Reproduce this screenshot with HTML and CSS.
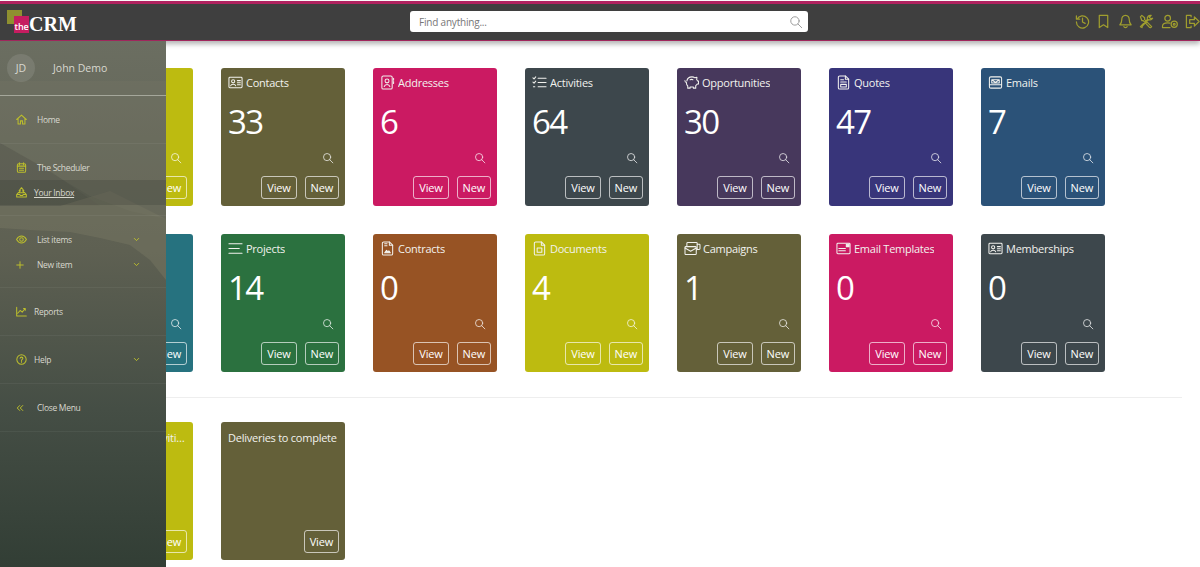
FILE: index.html
```html
<!DOCTYPE html>
<html lang="en">
<head>
    <meta charset="UTF-8">
    <meta name="viewport" content="width=device-width, initial-scale=1.0">
    <title>theCRM</title>
    <link rel="stylesheet" href="styles.css">
</head>
<body>
    <!-- Icon sprite -->
    <svg class="sprite" xmlns="http://www.w3.org/2000/svg">
        <symbol id="i-search" viewBox="0 0 16 16"><circle cx="6.800" cy="6.800" r="4.800"/><path d="M10.300 10.300 14.500 14.500"/></symbol>
        <symbol id="i-contact" viewBox="0 0 16 16"><rect x="1" y="2.500" width="14" height="11" rx="1"/><circle cx="5.500" cy="6.700" r="1.700"/><path d="M2.800 11.500c.6-2.200 4.800-2.200 5.400 0M10 6h3.200M10 8.200h3.200M10 10.400h3.200"/></symbol>
        <symbol id="i-address" viewBox="0 0 16 16"><rect x="2" y="1" width="11" height="14" rx="1.500"/><circle cx="7.500" cy="6.300" r="2.100"/><path d="M4.500 12.300c.7-3 5.300-3 6 0M14.500 3.500v2M14.500 7v2"/></symbol>
        <symbol id="i-check" viewBox="0 0 16 16"><path d="M1 3l1.200 1.200L4 2M1 7.500l1.200 1.200L4 6.500M1.500 12.500h1.500M6.500 3.500H15M6.500 8H15M6.500 12.500H15"/></symbol>
        <symbol id="i-piggy" viewBox="0 0 16 16"><path d="M3 6.500C3.500 3.500 6 2 8.500 2c1.500 0 2.500.5 3.300 1l2-.5-.3 2.500c.5.500.8 1 1 1.500H15.500v3h-1.300c-.5.800-1 1.300-1.700 1.800V14h-2.500v-1.200H6.500V14H4v-2.300C2.800 10.800 2.500 9.500 2.700 8 1.500 7.800 1 7 1 6"/><path d="M6.500 5c1-.4 2.200-.4 3 0"/></symbol>
        <symbol id="i-quote" viewBox="0 0 16 16"><path d="M10 1H4a1.500 1.500 0 0 0-1.500 1.500v11A1.500 1.500 0 0 0 4 15h8a1.500 1.500 0 0 0 1.500-1.500V4.500z"/><path d="M10 1v3.500h3.500M5 5h3M5 7.500h6M5 10h6v2.800H5z"/></symbol>
        <symbol id="i-email" viewBox="0 0 16 16"><rect x="1.500" y="2" width="13" height="12" rx="1.500"/><path d="M1.500 10.500h13M4 5l4 3 4-3M4 5h8v3.500H4z"/></symbol>
        <symbol id="i-list" viewBox="0 0 16 16"><path d="M1 3h14M1 8h11M1 13h14"/></symbol>
        <symbol id="i-contract" viewBox="0 0 16 16"><path d="M10 1H4a1.500 1.500 0 0 0-1.500 1.500v11A1.500 1.500 0 0 0 4 15h8a1.500 1.500 0 0 0 1.500-1.500V4.500z"/><path d="M10 1v3.500h3.500M5 3h2.500M5 5h2.500"/><path class="solid" d="M5 12.500l2-2.500 1.500 1.500 1-1 1.500 2z"/></symbol>
        <symbol id="i-doc" viewBox="0 0 16 16"><path d="M10 1H4a1.500 1.500 0 0 0-1.500 1.500v11A1.500 1.500 0 0 0 4 15h8a1.500 1.500 0 0 0 1.500-1.500V4.500z"/><path d="M10 1v3.500h3.500M5.500 7.500h5v4.500h-5z"/></symbol>
        <symbol id="i-campaign" viewBox="0 0 18 16"><rect x="3" y="1.500" width="11" height="8" rx="1"/><path d="M14 3.500h2.500a1 1 0 0 1 .5 1v3.500a1 1 0 0 1-1 1h-2"/><rect x="1" y="6" width="12" height="8.500" rx="1" fill="var(--card-bg)"/><path d="M1 7.500l6 3.500 6-3.500"/></symbol>
        <symbol id="i-template" viewBox="0 0 16 16"><rect x="1" y="2.500" width="14" height="11" rx="1"/><path d="M3 8h7M3 10.500h7"/><path class="solid" d="M11 3.500h3v2.500h-3z"/></symbol>
        <symbol id="i-history" viewBox="0 0 16 16"><path d="M2.200 5.500A6.500 6.500 0 1 1 1.500 8.500M1.500 2v3.500H5M8 4.500V8.500l2.800 1.500"/></symbol>
        <symbol id="i-bookmark" viewBox="0 0 16 16"><path d="M3.500 1.500h9v13L8 11.500l-4.500 3z"/></symbol>
        <symbol id="i-bell" viewBox="0 0 16 16"><path d="M8 1.500c-2.800 0-4 2.200-4 4.500 0 3-1 4.500-2 5.500h12c-1-1-2-2.500-2-5.500 0-2.300-1.200-4.500-4-4.500zM6.300 13.500c.3 1.300 3.100 1.300 3.400 0"/></symbol>
        <symbol id="i-tools" viewBox="0 0 16 16"><path d="M1.500 3 3 1.500l3 2.500v2l7.500 7.500-1 1-1.300-.2L4.500 7H3zM14.500 4.500A3.300 3.300 0 0 1 10.300 6L3.500 12.800l-.3 1.700-1.700-1 7.500-7.800A3.300 3.300 0 0 1 13 1.500L11 3.500l1.500 1.500z"/></symbol>
        <symbol id="i-usergear" viewBox="0 0 18 16"><circle cx="6.500" cy="4.500" r="3"/><path d="M1 14.500v-1.500c0-2.500 2-3.500 5.500-3.500 1 0 1.800.1 2.500.3M1 14.500h8"/><circle cx="13.500" cy="11" r="3.300"/><circle cx="13.500" cy="11" r="1"/></symbol>
        <symbol id="i-exit" viewBox="0 0 16 16"><path d="M6.500 3V1.500h-5v13h5V13M5 6h5V3l5 5-5 5v-3H5z"/></symbol>
        <symbol id="i-home" viewBox="0 0 16 16"><path d="M1 8l7-6.500L15 8M3 6.500V14.500h3.500V10h3v4.500H13V6.500"/></symbol>
        <symbol id="i-calendar" viewBox="0 0 16 16"><rect x="2" y="2.500" width="12" height="12.500" rx="2"/><path d="M5 1v3M11 1v3M2 6h12M5 9h6M5 12h6"/></symbol>
        <symbol id="i-inbox" viewBox="0 0 16 16"><path d="M8 1 4.500 5.500H6.500L4 8.500h8L9.500 5.500h2zM3.500 8 1 11v3.500h14V11l-2.500-3M1 11h4.500l1 1.500h3l1-1.500H15"/></symbol>
        <symbol id="i-eye" viewBox="0 0 16 16"><path d="M.8 8C3 4 5.500 3 8 3s5 1 7.200 5c-2.200 4-4.700 5-7.200 5S3 12 .8 8z"/><circle cx="8" cy="8" r="2.600"/></symbol>
        <symbol id="i-plus" viewBox="0 0 16 16"><path d="M8 1.500v13M1.500 8h13"/></symbol>
        <symbol id="i-chart" viewBox="0 0 16 16"><path d="M1 2v12.500h14M2.500 10.500 6 6.500l3 2.500 4-5M11 3.500h2.500V6"/></symbol>
        <symbol id="i-help" viewBox="0 0 16 16"><circle cx="8" cy="8" r="6.800"/><path d="M6 6.200C6.200 4 10 4 10 6.200 10 7.800 8 7.800 8 9.500M8 11v1"/></symbol>
        <symbol id="i-chevron" viewBox="0 0 16 16"><path d="M3 5.500 8 10.500 13 5.500"/></symbol>
        <symbol id="i-close" viewBox="0 0 16 16"><path d="M7.500 3 2.500 8l5 5M13.500 3l-5 5 5 5"/></symbol>
    </svg>

    <header class="topbar">
        <a class="logo" href="#">
            <span class="logo-back"></span>
            <span class="logo-front">the</span>
            <span class="logo-crm">CRM</span>
        </a>
        <div class="search-box">
            <span>Find anything...</span>
            <svg class="icon"><use href="#i-search"/></svg>
        </div>
        <div class="top-icons">
            <svg class="icon"><use href="#i-history"/></svg>
            <svg class="icon"><use href="#i-bookmark"/></svg>
            <svg class="icon"><use href="#i-bell"/></svg>
            <svg class="icon"><use href="#i-tools"/></svg>
            <svg class="icon wide"><use href="#i-usergear"/></svg>
            <svg class="icon"><use href="#i-exit"/></svg>
        </div>
    </header>

    <aside class="side-menu">
        <svg class="side-bg" viewBox="0 0 166 526" preserveAspectRatio="none">
            <defs>
                <linearGradient id="sideFade" x1="0" y1="0" x2="0" y2="1">
                    <stop offset="0" stop-color="#6b6e61"/>
                    <stop offset="0.4" stop-color="#5e6052"/>
                    <stop offset="0.7" stop-color="#454e45"/>
                    <stop offset="1" stop-color="#323e35"/>
                </linearGradient>
            </defs>
            <rect width="166" height="526" fill="url(#sideFade)"/>
            <path d="M0 102 40 125 90 155 130 170 166 178V40H0z" fill="#777868" opacity="0.3"/>
            <path d="M0 102 50 130 100 165 0 165z" fill="#4f5146" opacity="0.25"/>
            <path d="M60 165 110 150 166 178V239L150 219 130 204 100 197 70 191 30 189 0 187V165z" fill="#757562" opacity="0.5"/>
        </svg>
        <div class="user-row">
            <span class="avatar">JD</span>
            <span class="user-name">John Demo</span>
        </div>
        <nav class="menu-group single">
            <a class="menu-item" href="#"><svg class="icon"><use href="#i-home"/></svg><span>Home</span></a>
        </nav>
        <nav class="menu-group double">
            <a class="menu-item" href="#"><svg class="icon"><use href="#i-calendar"/></svg><span>The Scheduler</span></a>
            <a class="menu-item near active" href="#"><svg class="icon"><use href="#i-inbox"/></svg><span>Your Inbox</span></a>
        </nav>
        <nav class="menu-group double">
            <a class="menu-item" href="#"><svg class="icon"><use href="#i-eye"/></svg><span>List items</span><svg class="icon caret"><use href="#i-chevron"/></svg></a>
            <a class="menu-item" href="#"><svg class="icon small"><use href="#i-plus"/></svg><span>New item</span><svg class="icon caret"><use href="#i-chevron"/></svg></a>
        </nav>
        <nav class="menu-group single">
            <a class="menu-item near" href="#"><svg class="icon"><use href="#i-chart"/></svg><span>Reports</span></a>
        </nav>
        <nav class="menu-group single">
            <a class="menu-item near" href="#"><svg class="icon"><use href="#i-help"/></svg><span>Help</span><svg class="icon caret"><use href="#i-chevron"/></svg></a>
        </nav>
        <nav class="menu-group single">
            <a class="menu-item" href="#"><svg class="icon small"><use href="#i-close"/></svg><span>Close Menu</span></a>
        </nav>
    </aside>

    <main class="dashboard">
        <section class="card-grid">
            <div class="card lime">
                <div class="card-head"><svg class="icon"><use href="#i-contact"/></svg><span>Accounts</span></div>
                <div class="card-count">12</div>
                <svg class="icon find"><use href="#i-search"/></svg>
                <div class="card-actions"><a href="#">View</a><a href="#">New</a></div>
            </div>
            <div class="card olive">
                <div class="card-head"><svg class="icon"><use href="#i-contact"/></svg><span>Contacts</span></div>
                <div class="card-count">33</div>
                <svg class="icon find"><use href="#i-search"/></svg>
                <div class="card-actions"><a href="#">View</a><a href="#">New</a></div>
            </div>
            <div class="card pink">
                <div class="card-head"><svg class="icon"><use href="#i-address"/></svg><span>Addresses</span></div>
                <div class="card-count">6</div>
                <svg class="icon find"><use href="#i-search"/></svg>
                <div class="card-actions"><a href="#">View</a><a href="#">New</a></div>
            </div>
            <div class="card slate">
                <div class="card-head"><svg class="icon"><use href="#i-check"/></svg><span>Activities</span></div>
                <div class="card-count">64</div>
                <svg class="icon find"><use href="#i-search"/></svg>
                <div class="card-actions"><a href="#">View</a><a href="#">New</a></div>
            </div>
            <div class="card purple">
                <div class="card-head"><svg class="icon"><use href="#i-piggy"/></svg><span>Opportunities</span></div>
                <div class="card-count">30</div>
                <svg class="icon find"><use href="#i-search"/></svg>
                <div class="card-actions"><a href="#">View</a><a href="#">New</a></div>
            </div>
            <div class="card indigo">
                <div class="card-head"><svg class="icon"><use href="#i-quote"/></svg><span>Quotes</span></div>
                <div class="card-count">47</div>
                <svg class="icon find"><use href="#i-search"/></svg>
                <div class="card-actions"><a href="#">View</a><a href="#">New</a></div>
            </div>
            <div class="card blue">
                <div class="card-head"><svg class="icon"><use href="#i-email"/></svg><span>Emails</span></div>
                <div class="card-count">7</div>
                <svg class="icon find"><use href="#i-search"/></svg>
                <div class="card-actions"><a href="#">View</a><a href="#">New</a></div>
            </div>

            <div class="card teal">
                <div class="card-head"><svg class="icon"><use href="#i-calendar"/></svg><span>Appointments</span></div>
                <div class="card-count">9</div>
                <svg class="icon find"><use href="#i-search"/></svg>
                <div class="card-actions"><a href="#">View</a><a href="#">New</a></div>
            </div>
            <div class="card green">
                <div class="card-head"><svg class="icon"><use href="#i-list"/></svg><span>Projects</span></div>
                <div class="card-count">14</div>
                <svg class="icon find"><use href="#i-search"/></svg>
                <div class="card-actions"><a href="#">View</a><a href="#">New</a></div>
            </div>
            <div class="card brown">
                <div class="card-head"><svg class="icon"><use href="#i-contract"/></svg><span>Contracts</span></div>
                <div class="card-count">0</div>
                <svg class="icon find"><use href="#i-search"/></svg>
                <div class="card-actions"><a href="#">View</a><a href="#">New</a></div>
            </div>
            <div class="card lime">
                <div class="card-head"><svg class="icon"><use href="#i-doc"/></svg><span>Documents</span></div>
                <div class="card-count">4</div>
                <svg class="icon find"><use href="#i-search"/></svg>
                <div class="card-actions"><a href="#">View</a><a href="#">New</a></div>
            </div>
            <div class="card olive">
                <div class="card-head"><svg class="icon wide"><use href="#i-campaign"/></svg><span>Campaigns</span></div>
                <div class="card-count">1</div>
                <svg class="icon find"><use href="#i-search"/></svg>
                <div class="card-actions"><a href="#">View</a><a href="#">New</a></div>
            </div>
            <div class="card pink">
                <div class="card-head"><svg class="icon"><use href="#i-template"/></svg><span>Email Templates</span></div>
                <div class="card-count">0</div>
                <svg class="icon find"><use href="#i-search"/></svg>
                <div class="card-actions"><a href="#">View</a><a href="#">New</a></div>
            </div>
            <div class="card slate">
                <div class="card-head"><svg class="icon"><use href="#i-contact"/></svg><span>Memberships</span></div>
                <div class="card-count">0</div>
                <svg class="icon find"><use href="#i-search"/></svg>
                <div class="card-actions"><a href="#">View</a><a href="#">New</a></div>
            </div>
        </section>

        <hr class="divider">

        <section class="card-grid">
            <div class="card lime">
                <div class="card-head plain"><span>Uncompleted activities</span></div>
                <div class="card-actions"><a href="#">View</a><a href="#">New</a></div>
            </div>
            <div class="card olive">
                <div class="card-head plain"><span>Deliveries to complete</span></div>
                <div class="card-actions"><a href="#">View</a></div>
            </div>
        </section>
    </main>
</body>
</html>
```

FILE: styles.css
```css
html, body {
    height: 100%;
}

body {
    margin: 0;
    padding: 0;
    font-family: "Open Sans", "Noto Sans", sans-serif;
    background-color: #fff;
    position: relative;
    overflow: hidden;
}

a {
    color: inherit;
    text-decoration: none;
}

.sprite {
    display: none;
}

.icon {
    width: 16px;
    height: 16px;
    flex: none;
    fill: none;
    stroke: currentColor;
    stroke-width: 1.1;
    stroke-linecap: round;
    stroke-linejoin: round;
}

.icon.wide {
    width: 18px;
}

.solid {
    fill: currentColor;
}

/* top bar */
.topbar {
    height: 36px;
    margin-top: 1px;
    border-top: 3px solid #b0225f;
    border-bottom: 1px solid #a0265c;
    background-color: #3f3f3f;
    box-shadow: 0 3px 5px rgba(0, 0, 0, 0.3);
    display: flex;
    align-items: center;
    position: relative;
}

.logo {
    width: 410px;
    height: 36px;
    position: relative;
    flex: none;
}

.logo-back {
    position: absolute;
    left: 7px;
    top: 6px;
    width: 15px;
    height: 14px;
    background-color: #8f9030;
}

.logo-front {
    position: absolute;
    left: 14px;
    top: 12px;
    width: 15px;
    height: 17px;
    box-sizing: border-box;
    background-color: #c51d60;
    color: #fff;
    font-size: 9px;
    line-height: 12px;
    font-weight: 600;
    letter-spacing: -0.2px;
    display: flex;
    align-items: flex-end;
    justify-content: center;
}

.logo-crm {
    position: absolute;
    left: 29px;
    top: 9px;
    color: #fff;
    font-family: "Liberation Serif", serif;
    font-size: 20px;
    line-height: 22px;
    font-weight: 700;
}

.search-box {
    width: 398px;
    height: 21px;
    margin-bottom: 1px;
    padding: 0 5px 0 9px;
    box-sizing: border-box;
    background-color: #fff;
    border-radius: 3px;
    display: flex;
    align-items: center;
    justify-content: space-between;
    color: #777;
    font-size: 10px;
    letter-spacing: -0.2px;
}

.search-box .icon {
    width: 14px;
    height: 14px;
    color: #999;
}

.top-icons {
    margin-left: auto;
    margin-bottom: 2px;
    display: flex;
    align-items: center;
    gap: 6.4px;
    color: #a09e2e;
}

.top-icons .icon {
    width: 15px;
    height: 15px;
    stroke-width: 1.3;
}

.top-icons .icon.wide {
    width: 18px;
}

/* side menu sits over the page */
.side-menu {
    position: absolute;
    left: 0;
    top: 41px;
    bottom: 0;
    width: 166px;
    overflow: hidden;
    color: #d8d8cf;
    font-size: 8.5px;
    letter-spacing: -0.3px;
}

.side-bg {
    position: absolute;
    left: 0;
    top: 0;
    width: 100%;
    height: 100%;
    z-index: 0;
}

.user-row,
.menu-group {
    position: relative;
    z-index: 1;
}

.user-row {
    height: 55px;
    padding-left: 7px;
    box-sizing: border-box;
    border-bottom: 1px solid #a5a79b;
    display: flex;
    align-items: center;
    letter-spacing: 0;
}

.avatar {
    width: 28px;
    height: 28px;
    border-radius: 50%;
    background-color: rgba(255, 255, 255, 0.1);
    display: flex;
    align-items: center;
    justify-content: center;
    font-size: 10.5px;
}

.user-name {
    margin-left: 18px;
    font-size: 10.5px;
}

.menu-group {
    box-sizing: border-box;
    border-bottom: 1px solid rgba(255, 255, 255, 0.05);
    display: flex;
    flex-direction: column;
    justify-content: center;
}

.menu-group.single {
    height: 48px;
}

.menu-group.double {
    height: 72px;
    padding-top: 1px;
}

.menu-item {
    height: 25px;
    display: flex;
    align-items: center;
    padding-left: 16px;
    box-sizing: border-box;
}

.menu-item .icon {
    width: 11px;
    height: 11px;
    color: #bcbe2c;
    margin-right: 10px;
    stroke-width: 1.5;
}

.menu-item .icon.small {
    width: 8px;
    height: 8px;
    margin-right: 13px;
    stroke-width: 2;
}

.menu-item.near .icon {
    margin-right: 7px;
}

.menu-item .icon.caret {
    width: 7px;
    height: 7px;
    margin: 0 26px 0 auto;
    stroke-width: 2.2;
}

.menu-item.active {
    background-color: rgba(40, 44, 38, 0.2);
}

.menu-item.active span {
    text-decoration: underline;
}

/* cards */
.dashboard {
    padding: 27px 18px 0 69px;
}

.card-grid {
    display: grid;
    grid-template-columns: repeat(7, 124px);
    grid-auto-rows: 138px;
    column-gap: 28px;
    row-gap: 28px;
}

.divider {
    border: none;
    border-top: 1px solid #eeeeee;
    margin: 25px 0 24px -69px;
}

.card {
    --card-bg: #646039;
    background-color: var(--card-bg);
    color: #fff;
    border-radius: 3px;
    padding: 6px 6px 7px 7px;
    box-sizing: border-box;
    display: flex;
    flex-direction: column;
    min-width: 0;
}

.lime { --card-bg: #bdbb10; }
.olive { --card-bg: #646039; }
.pink { --card-bg: #cb1a62; }
.slate { --card-bg: #3d474c; }
.purple { --card-bg: #47385c; }
.indigo { --card-bg: #38357a; }
.blue { --card-bg: #2b5278; }
.teal { --card-bg: #26727f; }
.green { --card-bg: #2b713f; }
.brown { --card-bg: #975324; }

.card-head {
    height: 17px;
    display: flex;
    align-items: center;
    gap: 2px;
    font-size: 11px;
    letter-spacing: -0.25px;
    white-space: nowrap;
    color: #f2f2ee;
}

.card-head .icon {
    width: 15px;
    height: 15px;
    margin-right: 1px;
}

.card-head .icon.wide {
    width: 17px;
    margin-right: 0;
}

.card-head span {
    overflow: hidden;
    text-overflow: ellipsis;
}

.card-head.plain {
    height: 18px;
}

.card-count {
    margin-top: 11px;
    font-size: 33px;
    line-height: 40px;
    letter-spacing: -1.5px;
}

.find {
    margin: 10px 5px 0 auto;
    width: 12px;
    height: 12px;
    opacity: 0.85;
}

.card-actions {
    margin-top: auto;
    display: flex;
    justify-content: flex-end;
    gap: 8px;
}

.card-actions a {
    height: 23px;
    padding: 0 5px;
    box-sizing: border-box;
    border: 1px solid rgba(255, 255, 255, 0.65);
    border-radius: 3px;
    font-size: 11px;
    line-height: 21px;
    letter-spacing: -0.2px;
}
```
